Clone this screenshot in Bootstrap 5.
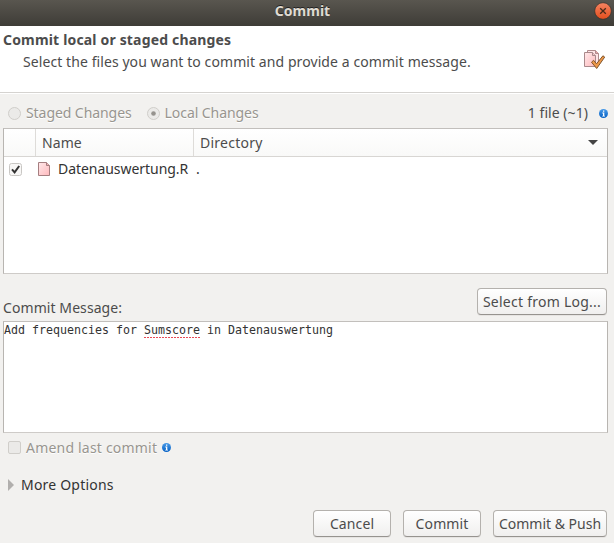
<!DOCTYPE html>
<html lang="en">
<head>
<meta charset="utf-8">
<meta name="viewport" content="width=device-width, initial-scale=1">
<title>Commit</title>
<link href="https://cdn.jsdelivr.net/npm/bootstrap@5.3.0/dist/css/bootstrap.min.css" rel="stylesheet">
<style>
body{width:614px;height:543px;background:#f2f1ef;color:#4c4c4c;font:14px/20px "Noto Sans","Open Sans",sans-serif;letter-spacing:.08px;white-space:nowrap}
svg{display:block;flex:none}
.titlebar{height:26px;background:linear-gradient(#59564f,#3e3c37);color:#dfdbd2;text-shadow:0 -1px #222;padding:0 2px 4px 0}
.titlebar strong{padding-left:11px;letter-spacing:0}
.intro{height:67px;background:#fff;border-bottom:1px solid #d5d3d0;padding:4px 7px 0 3px}
.intro h1{font-size:14px;line-height:20px;letter-spacing:.17px}
.intro p{padding-left:20px;line-height:20px;padding-top:2px;letter-spacing:.08px}
.intro svg{margin-top:18px}
.modes{height:35px;border-top:1px solid #fff;padding:9px 5px 0 8px}
.modes .choice{padding-left:5px;letter-spacing:-.07px}
.modes .choice+.radio{margin-left:15px}
.tally{letter-spacing:.05px}
.muted{color:#98958f;text-shadow:0 1px #fff}
.radio{width:13px;height:13px;border:1px solid #d0ceca;border-radius:50%;background:#ebeae8}
.tick{width:13px;height:13px;border:1px solid #d0ceca;border-radius:2px;background:#ebeae8}
.pane{margin:0 6px 0 3px;background:#fff;border:1px solid #b8b5b1;border-top-color:#c2bfbc;border-bottom-color:#cecbc8}
.files{height:146px}
.heads{height:28px;background:linear-gradient(#fff,#f9f9f8);border-bottom:1px solid #d8d6d3}
.heads>div{border-right:1px solid #dedcd9;padding-left:6px}
.heads>div:last-child{border:0;padding-right:9px;letter-spacing:.25px}
.c1{width:32px}.c2{width:158px}
.entry{height:24px;padding-left:5px;color:#333}
.entry .fname{width:145px;padding-left:7px;letter-spacing:-.05px}
.message{height:112px;padding-top:0;font:11.63px/17px "DejaVu Sans Mono",monospace;letter-spacing:0;color:#333}
.message u{text-decoration:none;background:repeating-linear-gradient(90deg,#e84a55 0 2px,#fff 2px 3px) 0 100%/100% 1px no-repeat;padding-bottom:1px}
.label-row{height:47px;padding:14px 7px 3px 3px}
.btn.push{height:27px;padding:0;font-size:14px;line-height:24px;color:#4c4c4c;border:1px solid #b4b1ad;border-bottom-color:#96938f;border-radius:4px;background:linear-gradient(#fff,#f0efee);box-shadow:0 1px #e6e4e2}
.btn.w-log{width:130px;letter-spacing:.25px;margin-bottom:3px}.w-std{width:78px;letter-spacing:.1px}.w-wide{width:114px;letter-spacing:0}
.amend{height:29px;padding-left:8px}
.amend span{letter-spacing:.2px;padding:0 1px 0 5px}
.more{height:46px;padding-left:8px;color:#333}
.more span{padding-left:7px;letter-spacing:.2px}
.actions{height:27px;margin-top:2px;padding-right:7px;gap:12px}
</style>
<script src="https://cdn.jsdelivr.net/npm/bootstrap@5.3.0/dist/js/bootstrap.bundle.min.js"></script>
</head>
<body class="d-flex flex-column overflow-hidden">
<svg width="0" height="0" class="position-absolute" aria-hidden="true">
  <defs>
    <linearGradient id="blue" x2="0" y2="1"><stop stop-color="#4a9be8"/><stop offset="1" stop-color="#0560c4"/></linearGradient>
    <linearGradient id="pink" x2="1" y2="1"><stop stop-color="#ffe9ea"/><stop offset="1" stop-color="#ffb9bd"/></linearGradient>
    <linearGradient id="red" x2="0" y2="1"><stop stop-color="#f58462"/><stop offset="1" stop-color="#e54e1d"/></linearGradient>
    <symbol id="info" viewBox="0 0 9 9"><circle cx="4.5" cy="4.5" r="4.5" fill="url(#blue)"/><path d="M4 1.5h1.3v1.2H4zM3.3 3.6h2V6.7H6v.8H3.2v-.8H4V4.4h-.7z" fill="#fff"/></symbol>
  </defs>
</svg>
<header class="titlebar d-flex align-items-center">
  <strong class="flex-grow-1 text-center">Commit</strong>
  <svg width="18" height="18" viewBox="0 0 18 18"><circle cx="9" cy="9" r="8.3" fill="url(#red)" stroke="#33302b" stroke-width=".7"/><path d="M6.2 6.2l5.6 5.6M11.8 6.2l-5.6 5.6" stroke="#4b2a19" stroke-width="1.3"/></svg>
</header>
<section class="intro d-flex justify-content-between">
  <div><h1 class="fw-bold m-0">Commit local or staged changes</h1><p class="m-0">Select the files you want to commit and provide a commit message.</p></div>
  <svg width="24" height="24" viewBox="0 0 24 24">
    <path d="M4.5 2.5h8l3 3v11h-11z" fill="#ffe4e6" stroke="#b08a8c"/>
    <path d="M12.5 2.5v3h3" fill="#eba9ae" stroke="#b08a8c"/>
    <path d="M1.5 4.5h8l3 3v11h-11z" fill="url(#pink)" stroke="#a9898b"/>
    <path d="M9.5 4.5v3h3" fill="#f4c1c5" stroke="#a9898b"/>
    <path d="M8.5 14.2l2.1-1.9 2.9 3.5 6.4-8 1.8 1.3-8 11.4z" fill="#ee9848" stroke="#80562f" stroke-linejoin="round"/>
  </svg>
</section>
<div class="modes d-flex align-items-start justify-content-between">
  <div class="d-flex muted align-items-center">
    <span class="radio"></span><span class="choice">Staged Changes</span>
    <span class="radio d-flex align-items-center justify-content-center"><svg width="5" height="5"><circle cx="2.5" cy="2.5" r="2.3" fill="#96938e"/></svg></span><span class="choice">Local Changes</span>
  </div>
  <div class="tally d-flex align-items-center">1 file (~1)<svg class="ms-2" width="13" height="9"><use href="#info" x="3" width="9" height="9"/></svg></div>
</div>
<section class="pane files">
  <div class="heads d-flex"><div class="c1"></div><div class="c2 d-flex align-items-center">Name</div>
    <div class="flex-grow-1 d-flex align-items-center justify-content-between">Directory<svg width="10" height="5"><path d="M0 0h10L5 5z" fill="#444"/></svg></div></div>
  <div class="entry d-flex align-items-center">
    <svg width="13" height="13"><rect x=".5" y=".5" width="12" height="12" rx="2" fill="#f8f7f6" stroke="#c9c7c4"/><path d="M3 6.3l2.6 3L10.2 3" fill="none" stroke="#333" stroke-width="2"/></svg>
    <svg class="ms-3" width="13" height="16" viewBox="0 0 13 16"><path d="M.5 1.5h8l3 3v10H.5z" fill="url(#pink)" stroke="#a57e80"/><path d="M8.5 1.5v3h3" fill="#f1b3b7" stroke="#a57e80"/></svg>
    <span class="fname">Datenauswertung.R</span><span>.</span>
  </div>
</section>
<div class="label-row d-flex justify-content-between align-items-end"><span>Commit Message:</span><button class="btn push w-log">Select from Log...</button></div>
<section class="pane message">Add frequencies for <u>Sumscore</u> in Datenauswertung</section>
<div class="amend d-flex align-items-center muted"><i class="tick"></i><span>Amend last commit</span><svg class="ms-1" width="9" height="9"><use href="#info" width="9" height="9"/></svg></div>
<div class="more d-flex align-items-center"><svg width="6" height="12"><path d="M0 0l6 6-6 6z" fill="#b1afad"/></svg><span>More Options</span></div>
<footer class="actions d-flex justify-content-end"><button class="btn push w-std">Cancel</button><button class="btn push w-std">Commit</button><button class="btn push w-wide">Commit &amp; Push</button></footer>
</body>
</html>
